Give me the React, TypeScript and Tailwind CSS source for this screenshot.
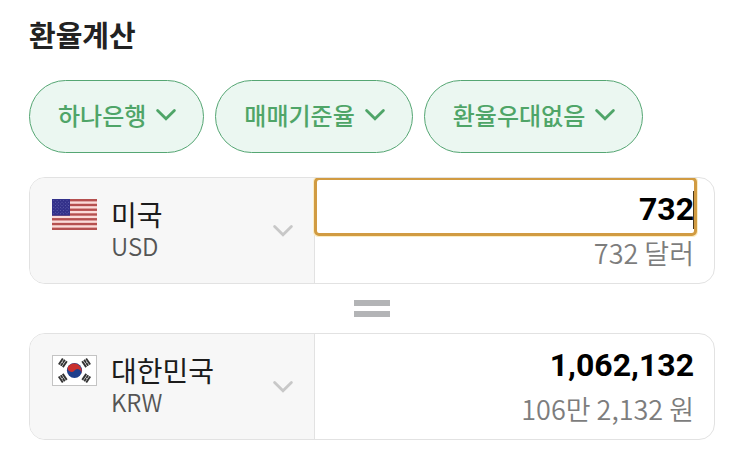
import { useState } from "react";

const KRW_PER_USD = 1451;

const US_STRIPES = [0, 2, 4, 6, 8, 10, 12];
const US_STAR_ROWS = [0, 1, 2, 3, 4, 5, 6, 7, 8];

// 1062132 -> "106만 2,132"
function toKoreanUnits(value: number) {
  const man = Math.floor(value / 10000);
  const rest = value % 10000;
  if (man === 0) {
    return rest.toLocaleString("en-US");
  }
  return `${man.toLocaleString("en-US")}만 ${rest.toLocaleString("en-US")}`;
}

function Chevron({ className }: { className: string }) {
  return (
    <svg
      width="22"
      height="14"
      viewBox="0 0 22 14"
      fill="none"
      stroke="currentColor"
      strokeWidth="2.8"
      strokeLinecap="round"
      className={className}
      aria-hidden="true"
    >
      <path d="M2.6 2.5 L11 10.8 L19.4 2.5" />
    </svg>
  );
}

function FlagUS() {
  return (
    <svg width="45" height="31" viewBox="0 0 45 31" aria-hidden="true">
      <rect width="45" height="31" fill="#fbdcd9" />
      {US_STRIPES.map((i) => (
        <rect key={i} y={i * 2.385} width="45" height="2.385" fill="#b5504f" />
      ))}
      <rect width="18" height="16.7" fill="#33318a" />
      {US_STAR_ROWS.map((row) =>
        [0, 1, 2, 3, 4].map((col) => (
          <circle
            key={`${row}-${col}`}
            cx={1.8 + col * 3.3 + (row % 2) * 1.6}
            cy={1.6 + row * 1.65}
            r="0.45"
            fill="#8080c4"
          />
        ))
      )}
    </svg>
  );
}

function Trigram({ transform }: { transform: string }) {
  return (
    <g transform={transform} fill="#333">
      <rect x="-3.6" y="-3.3" width="7.2" height="1.9" />
      <rect x="-3.6" y="-0.9" width="3.4" height="1.9" />
      <rect x="0.2" y="-0.9" width="3.4" height="1.9" />
      <rect x="-3.6" y="1.5" width="7.2" height="1.9" />
    </g>
  );
}

function FlagKR() {
  return (
    <svg width="45" height="31" viewBox="0 0 45 31" aria-hidden="true">
      <rect x="0.5" y="0.5" width="44" height="30" fill="#fff" stroke="#c4c4c4" />
      <circle cx="22.5" cy="15.5" r="7.6" fill="#1f3f8c" />
      <path
        d="M16.2 11.3 A7.6 7.6 0 0 1 28.8 19.7 A3.8 3.8 0 0 0 22.5 15.5 A3.8 3.8 0 0 1 16.2 11.3 Z"
        fill="#c9302f"
      />
      <Trigram transform="translate(10.8 7.8) rotate(-56)" />
      <Trigram transform="translate(34.2 7.8) rotate(56)" />
      <Trigram transform="translate(10.8 23.2) rotate(56)" />
      <Trigram transform="translate(34.2 23.2) rotate(-56)" />
    </svg>
  );
}

function PillSelect({ label, options }: { label: string; options: string[] }) {
  return (
    <div className="relative text-[#4fa568]">
      <select
        aria-label={label}
        className="field-sizing-content block h-[73px] appearance-none rounded-full border border-[#55a673] bg-[#ebf7f1] pr-[57px] pb-1 pl-7 text-2xl font-medium outline-none"
      >
        {options.map((option) => (
          <option key={option}>{option}</option>
        ))}
      </select>
      <Chevron className="pointer-events-none absolute top-7 right-[27px]" />
    </div>
  );
}

type CountryProps = {
  id: string;
  name: string;
  code: string;
  flag: React.ReactNode;
};

function Country({ id, name, code, flag }: CountryProps) {
  return (
    <div className="relative flex w-5/12 shrink-0 gap-3.5 border-r border-[#e2e2e2] bg-[#f7f7f7] pt-5 pb-[21px] pl-[22px]">
      <div className="flex h-8 items-center">{flag}</div>
      <div className="flex-1">
        <select
          id={id}
          aria-label="통화"
          className="block h-8 w-full appearance-none text-[28px] leading-8 text-[#1c1c1c] outline-none"
        >
          <option>{name}</option>
        </select>
        <label
          htmlFor={id}
          className="block text-2xl leading-8 font-[350] text-[#555]"
        >
          {code}
        </label>
      </div>
      <Chevron className="pointer-events-none absolute top-[46px] right-5 text-[#c8c8c8]" />
    </div>
  );
}

export default function App() {
  const [amount, setAmount] = useState("732");

  const usd = Number(amount.replace(/\D/g, ""));
  const krw = usd * KRW_PER_USD;

  return (
    <main className="min-h-screen bg-white pt-4 pr-7 pb-5 pl-[29px] font-['Noto_Sans_CJK_KR',sans-serif]">
      <h1 className="text-[29px] leading-9 font-bold text-[#222]">환율계산</h1>

      <div className="mt-7 flex gap-[11px]">
        <PillSelect label="은행" options={["하나은행"]} />
        <PillSelect label="환율 기준" options={["매매기준율"]} />
        <PillSelect label="환율 우대" options={["환율우대없음"]} />
      </div>

      <section className="mt-6 flex overflow-hidden rounded-2xl border border-[#e2e2e2]">
        <Country id="from" name="미국" code="USD" flag={<FlagUS />} />
        <div className="min-w-0 flex-1 pt-0.5 pr-5 pl-0.5 text-right">
          <div className="relative">
            <input
              aria-label="금액"
              autoFocus
              inputMode="numeric"
              value={amount}
              onChange={(e) => setAmount(e.target.value)}
              className="block h-[53px] w-full rounded-xs bg-white pt-1 text-right font-[Roboto,sans-serif] text-[32px] font-bold text-black caret-transparent shadow-[0_0_0_4px_#fbedc4] outline-3 outline-[#d19b42]"
            />
            <span className="absolute right-0 bottom-1 h-[38px] w-px bg-[#4a3a1c]"></span>
          </div>
          <p className="text-[27px] leading-10 font-[350] text-[#7d7d7d]">
            {toKoreanUnits(usd)} 달러
          </p>
        </div>
      </section>

      <div className="flex h-[49px] flex-col items-center justify-center gap-[5px]">
        <div className="h-1.5 w-9 bg-[#b3b4b6]"></div>
        <div className="h-1.5 w-9 bg-[#b3b4b6]"></div>
      </div>

      <section className="flex overflow-hidden rounded-2xl border border-[#e2e2e2]">
        <Country id="to" name="대한민국" code="KRW" flag={<FlagKR />} />
        <div className="min-w-0 flex-1 pt-0.5 pr-5 pl-0.5 text-right">
          <input
            aria-label="환산 금액"
            readOnly
            value={krw.toLocaleString("en-US")}
            className="block h-[53px] w-full bg-white pt-1 text-right font-[Roboto,sans-serif] text-[32px] font-bold text-black outline-none"
          />
          <p className="text-[27px] leading-10 font-[350] text-[#7d7d7d]">
            {toKoreanUnits(krw)} 원
          </p>
        </div>
      </section>
    </main>
  );
}
